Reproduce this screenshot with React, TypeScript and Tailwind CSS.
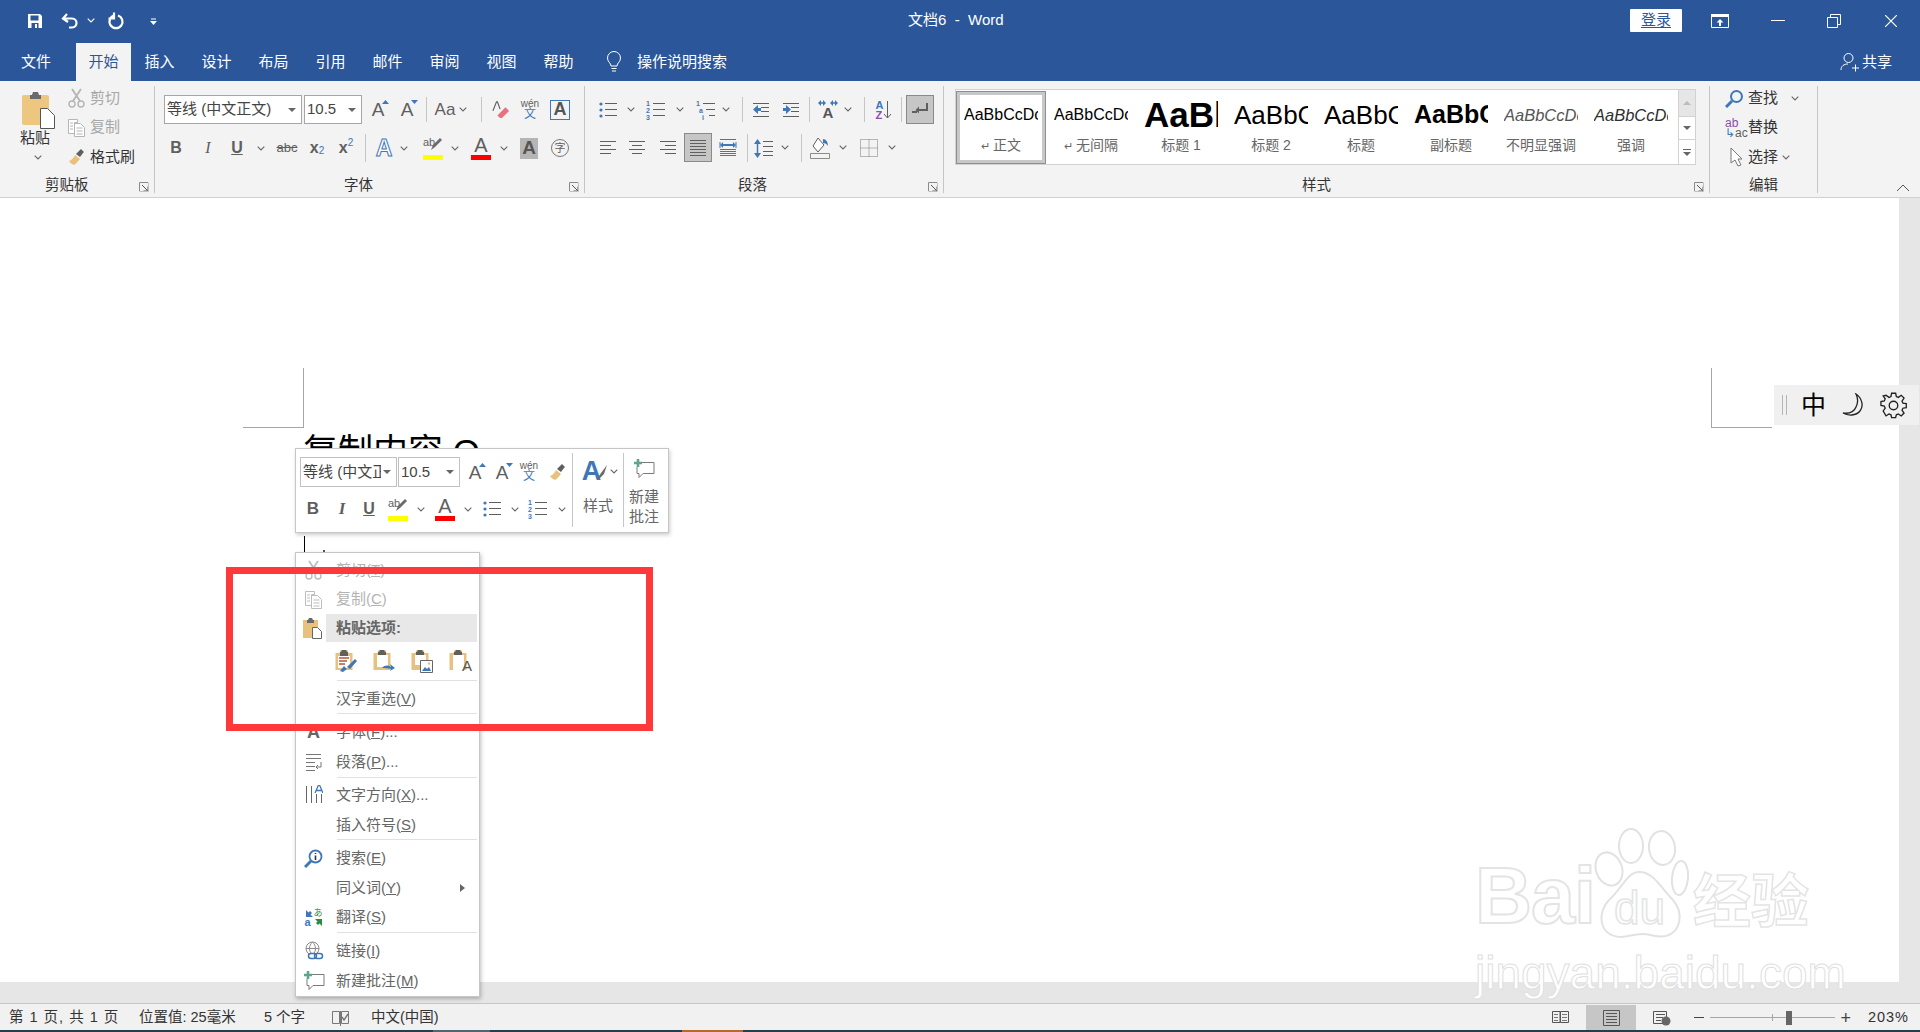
import type { ReactNode } from 'react'

const GRAY = '#5f5f5f'
const BLUE = '#3f77b8'

const Ic = ({ w = 20, h = 20, vb, className, children }: { w?: number; h?: number; vb?: string; className?: string; children: ReactNode }) => (
  <svg width={w} height={h} viewBox={vb ?? `0 0 ${w} ${h}`} fill="none" className={className}>
    {children}
  </svg>
)

const Chev = ({ className = '', color = '#666' }: { className?: string; color?: string }) => (
  <span className={`w-[12px] flex justify-center shrink-0 ${className}`}>
    <svg width="8" height="5" viewBox="0 0 8 5" fill="none">
      <path d="M.7.7 4 4 7.3.7" stroke={color} strokeWidth="1.1" />
    </svg>
  </span>
)

const Sep = ({ className = '' }: { className?: string }) => <span className={`w-px bg-[#c6c6c6] shrink-0 ${className}`} />

const Cell = ({ className = '', children }: { className?: string; children: ReactNode }) => (
  <span className={`flex items-center justify-center shrink-0 ${className}`}>{children}</span>
)

const Launcher = ({ className = '' }: { className?: string }) => (
  <svg width="10" height="10" viewBox="0 0 10 10" fill="none" className={className}>
    <path d="M.5 9V.5H9" stroke="#8a8a8a" />
    <path d="M3 3l5.5 5.5M9 4.5V9H4.5" stroke="#555" />
    <path d="M.5 9.5H9.5V.5" stroke="#c0c0c0" />
  </svg>
)

const Lines = ({ x = 2, w = 16, ys, color = GRAY }: { x?: number; w?: number; ys: number[]; color?: string }) => (
  <path d={ys.map((y) => `M${x} ${y + 0.5}h${w}`).join('')} stroke={color} />
)

const GrowA = ({ up }: { up: boolean }) => (
  <span className="relative text-[19px] leading-none text-[#5f5f5f]">
    A
    <svg width="7" height="4" viewBox="0 0 7 4" className="absolute -right-[5px] top-0">
      <path d={up ? 'M0 4 3.5 0 7 4Z' : 'M0 0h7L3.5 4Z'} fill={BLUE} />
    </svg>
  </span>
)

const Wen = () => (
  <span className="flex flex-col items-center leading-none">
    <span className="text-[10px] text-[#5f5f5f] leading-[9px]">wén</span>
    <span className="text-[12px] text-[#3f77b8] leading-[13px]">文</span>
  </span>
)

const Marker = () => (
  <span className="relative w-[20px] h-[24px] block">
    <span className="absolute left-0 top-0 text-[11px] leading-[12px] text-[#5f5f5f]">ab</span>
    <svg width="20" height="20" viewBox="0 0 20 20" fill="none" className="absolute left-0 top-0">
      <path d="M8 14l2-5 7-7 2 2-7 7-4 3Z" fill="#6b6b6b" />
    </svg>
    <span className="absolute left-0 bottom-0 w-[20px] h-[5px] bg-[#ffff00]" />
  </span>
)

const RedA = () => (
  <span className="flex flex-col items-center w-[20px]">
    <span className="text-[20px] leading-[19px] text-[#5f5f5f]">A</span>
    <span className="w-[20px] h-[5px] bg-[#ff0000]" />
  </span>
)

const Bullets = () => (
  <Ic>
    <circle cx="3" cy="4" r="1.6" fill={BLUE} />
    <circle cx="3" cy="10" r="1.6" fill={BLUE} />
    <circle cx="3" cy="16" r="1.6" fill={BLUE} />
    <Lines x={7} w={12} ys={[3, 9, 15]} />
  </Ic>
)

const Numbered = () => (
  <span className="relative block w-[20px] h-[20px]">
    <span className="absolute left-0 top-0 w-[6px] flex flex-col text-[7px] leading-[7px] font-bold text-[#3f77b8]">
      <span>1</span>
      <span>2</span>
      <span>3</span>
    </span>
    <Ic>
      <Lines x={7} w={12} ys={[3, 9, 15]} />
    </Ic>
  </span>
)

const Brush = () => (
  <Ic>
    <path d="M2 14c3-1 5-4 6-6l5 4c-2 2-4 5-6 6-2-1-4-2-5-4Z" fill="#e8c27c" />
    <path d="M9 7l4-4 1-1 3 3-1 1-3 4Z" fill="#5f5f5f" />
  </Ic>
)

const Comment = () => (
  <Ic w={22} h={22}>
    <path d="M8 4.5h13v11H10l-4 4v-4H4V9" stroke="#7a7a7a" />
    <path d="M5 1v8M1 5h8" stroke="#5fa58d" strokeWidth="2.6" />
  </Ic>
)

const Scissors = ({ color = '#b5b5b5' }: { color?: string }) => (
  <Ic>
    <circle cx="5" cy="16" r="3" stroke={color} strokeWidth="1.4" />
    <circle cx="14" cy="16" r="3" stroke={color} strokeWidth="1.4" />
    <path d="M6 13 14 1M13 13 5 1" stroke={color} strokeWidth="1.8" />
  </Ic>
)

const CopyIcon = ({ color = '#b5b5b5' }: { color?: string }) => (
  <Ic>
    <path d="M1.500 1.500h9v3h-3v11h-6ZM7.500 5.500h6l4 4v9h-10Z" stroke={color} fill="#fff" />
    <path d="M3 5h3M3 8h3M3 11h3M9.500 10h6M9.500 13h6M9.500 16h6" stroke={color} />
  </Ic>
)

const PasteBig = () => (
  <Ic w={35} h={39}>
    <rect x="1" y="5" width="27" height="30" rx="2" fill="#edc77f" />
    <path d="M9 5h2l1-3h5l1 3h2v4H9Z" fill="#6a6a6a" />
    <path d="M19.500 18.500h7l7 7v13h-14Z" fill="#fff" stroke="#555" />
  </Ic>
)

const Board = ({ children }: { children?: ReactNode }) => (
  <Ic w={24} h={24}>
    <path d="M1.500 4h4l1-3h7l1 3h4v17h-17Z" fill="#e8c27c" />
    <path d="M6 3h1l1-2h4l1 2h1v4H6Z" fill="#5f5f5f" />
    {children}
  </Ic>
)

const PasteOptions = () => (
  <div className="flex items-center ml-[38px] h-[38px] gap-[14px]">
    <Board>
      <path d="M4 7h12v12H4Z" fill="#fff" />
      <path d="M5 9h10M5 12h8M5 15h6" stroke="#b5553f" strokeWidth="1.500" />
      <path d="M6 22l4-5 3 3-4 3ZM13 18l8-8 2 2-7 8Z" fill={BLUE} />
    </Board>
    <Board>
      <path d="M5 6h11v12H5Z" fill="#fff" />
      <path d="M10 19c3-3 6-3 9-1l-1-3 5 4-5 3 1-2c-3-1-6-1-9-1Z" fill={BLUE} />
    </Board>
    <Board>
      <path d="M5 6h11v10H5Z" fill="#fff" />
      <path d="M10.500 11.500h12v12h-12Z" fill="#fff" stroke="#666" />
      <path d="M12 22l3-4 2 2 2-2 2 4Z" fill={BLUE} />
      <circle cx="19" cy="14.500" r="1.200" fill="#e8c27c" />
    </Board>
    <span className="relative block w-[24px] h-[24px]">
      <Board>
        <path d="M5 6h11v15H5Z" fill="#fff" />
      </Board>
      <span className="absolute right-0 bottom-0 text-[15px] leading-[15px] text-[#555]">A</span>
    </span>
  </div>
)

type MenuProps = { label: string; hot?: string; tail?: string; icon?: ReactNode; disabled?: boolean; arrow?: boolean; className?: string }

const MenuRow = ({ label, hot, tail, icon, disabled, arrow, className = '' }: MenuProps) => (
  <div className={`flex items-center ${className}`}>
    <span className="w-[40px] flex justify-center pr-[5px]">{icon}</span>
    <span className={`text-[15px] ${disabled ? 'text-[#b4b4b4]' : 'text-[#666]'}`}>
      {label}(<u>{hot}</u>){tail}
    </span>
    {arrow && <span className="ml-auto mr-[14px] w-0 h-0 border-y-[4px] border-y-transparent border-l-[5px] border-l-[#666]" />}
  </div>
)

const MenuSep = ({ className = '' }: { className?: string }) => <div className={`h-px ml-[41px] mr-[2px] bg-[#e1e1e1] ${className}`} />

const styleItems = [
  { sample: 'AaBbCcDc', label: '正文', mark: true, cls: 'text-[16px] text-black' },
  { sample: 'AaBbCcDc', label: '无间隔', mark: true, cls: 'text-[16px] text-black' },
  { sample: 'AaBbC', label: '标题 1', mark: false, cls: 'text-[35px] font-bold text-black' },
  { sample: 'AaBbC', label: '标题 2', mark: false, cls: 'text-[26px] text-black' },
  { sample: 'AaBbC', label: '标题', mark: false, cls: 'text-[26px] text-black' },
  { sample: 'AaBbC', label: '副标题', mark: false, cls: 'text-[25px] font-bold text-black' },
  { sample: 'AaBbCcDc', label: '不明显强调', mark: false, cls: 'text-[16.500px] italic text-[#555]' },
  { sample: 'AaBbCcDc', label: '强调', mark: false, cls: 'text-[16.500px] italic text-[#303030]' },
]

const tabs = ['插入', '设计', '布局', '引用', '邮件', '审阅', '视图', '帮助']

function TitleBar() {
  return (
    <div className="h-[43px] pb-[2px] flex items-center text-white relative">
      <Ic className="ml-[27px]" w={16} h={16}>
        <path d="M1 1h12l2 2v12H1Z" fill="#fff" />
        <path d="M3.500 2.500h8v5h-8ZM4.500 10h7v5h-7Z" fill="#2b579a" />
        <path d="M8 11h2v4H8Z" fill="#fff" />
      </Ic>
      <Ic className="ml-[18px]" w={18} h={18}>
        <path d="M6 2 2 6.500 7 10M3 6.500h8c6 0 6 9 0 9H8" stroke="#fff" strokeWidth="2.200" />
      </Ic>
      <Chev className="ml-[6px] w-[9px]" color="#fff" />
      <Ic className="ml-[10px]" w={18} h={18}>
        <path d="M11 3.500a6.500 6.500 0 1 1-4 0M7 .5v6H1.500" stroke="#fff" strokeWidth="2.200" />
      </Ic>
      <svg width="7" height="7" viewBox="0 0 7 7" className="ml-[25px] mt-[2px]">
        <path d="M1 .5h5v1H1ZM0 3h7L3.500 7Z" fill="#fff" />
      </svg>
      <span className="absolute left-[908px] text-[15px]">文档6&nbsp; -&nbsp; Word</span>
      <div className="ml-auto flex items-center">
        <span className="w-[52px] h-[23px] bg-white rounded-[1px] text-[15px] text-[#2b579a] flex items-center justify-center underline underline-offset-2">登录</span>
        <Ic className="ml-[29px]" w={18} h={14}>
          <path d="M.5.5h17v13H.5Z" stroke="#fff" />
          <path d="M0 0h18v3H0ZM9 5l3.500 3.500H10V12H8V8.500H5.500Z" fill="#fff" />
        </Ic>
        <span className="ml-[42px] w-[14px] h-[1px] bg-white" />
        <Ic className="ml-[42px]" w={14} h={14}>
          <path d="M3.500 3V.5h10v10H11M.5 3.500h10v10H.5Z" stroke="#fff" />
        </Ic>
        <Ic className="ml-[44px] mr-[23px]" w={12} h={12}>
          <path d="M0 0l12 12M12 0 0 12" stroke="#fff" strokeWidth="1.200" />
        </Ic>
      </div>
    </div>
  )
}

function TabRow() {
  return (
    <div className="h-[38px] flex text-white text-[15px]">
      <span className="ml-[21px] w-[55px] flex items-center">文件</span>
      <span className="w-[55px] bg-[#f3f3f3] text-[#2b579a] flex items-center justify-center">开始</span>
      {tabs.map((t) => (
        <span key={t} className="w-[57px] flex items-center justify-center first:ml-[-1px]">
          {t}
        </span>
      ))}
      <span className="ml-[19px] flex items-center">
        <Ic w={16} h={22}>
          <path d="M5 15c0-3-3.500-4-3.500-8a6.500 6.500 0 0 1 13 0c0 4-3.500 5-3.500 8Z" stroke="#fff" />
          <path d="M5.500 17.500h5M6 20h4" stroke="#fff" />
        </Ic>
      </span>
      <span className="ml-[15px] flex items-center">操作说明搜索</span>
      <span className="ml-auto mr-[28px] flex items-center gap-[3px]">
        <Ic w={19} h={20}>
          <circle cx="8.500" cy="6" r="4.500" stroke="#fff" />
          <path d="M1 18c0-4 3-6 7-6M12 16h7M15.500 12.500v7" stroke="#fff" />
        </Ic>
        共享
      </span>
    </div>
  )
}

function Group({ label, className, labelClass, launcher = true, children }: { label: string; className: string; labelClass: string; launcher?: boolean; children: ReactNode }) {
  return (
    <div className={`h-[107px] mt-[5px] border-r border-[#c6c6c6] flex flex-col shrink-0 ${className}`}>
      <div className="h-[93px]">{children}</div>
      <div className="h-[14px] flex items-center text-[14.500px] text-[#333]">
        <span className={labelClass}>{label}</span>
        {launcher && <Launcher className="ml-auto mr-[5px] mt-[1px]" />}
      </div>
    </div>
  )
}

function Clipboard() {
  return (
    <Group label="剪贴板" className="w-[155px]" labelClass="ml-[45px]">
      <div className="flex">
        <div className="w-[67px] pl-[21px] pt-[4px] flex flex-col items-start">
          <PasteBig />
          <span className="-ml-[1px] -mt-[1px] text-[15px] leading-[20px] text-[#333]">粘贴</span>
          <Chev className="ml-[11px] mt-[7px]" />
        </div>
        <div className="text-[15px] flex flex-col -mt-[3px]">
          <div className="h-[30px] flex items-center gap-[3px] text-[#a8a8a8]">
            <Scissors />
            <span>剪切</span>
          </div>
          <div className="h-[29px] flex items-center gap-[3px] text-[#a8a8a8]">
            <CopyIcon />
            <span>复制</span>
          </div>
          <div className="h-[30px] flex items-center gap-[3px] text-[#333]">
            <Brush />
            <span>格式刷</span>
          </div>
        </div>
      </div>
    </Group>
  )
}

function FontBox({ text, className, arrowClass = '' }: { text: string; className: string; arrowClass?: string }) {
  return (
    <span className={`bg-white border border-[#a6a6a6] flex items-center shrink-0 overflow-hidden text-[15px] text-[#444] ${className}`}>
      <span className="ml-[2px] whitespace-nowrap overflow-hidden flex-1">{text}</span>
      <span className={`w-0 h-0 mr-[5px] ml-[2px] border-x-[4px] border-x-transparent border-t-[4px] border-t-[#666] shrink-0 ${arrowClass}`} />
    </span>
  )
}

function FontGroup() {
  return (
    <Group label="字体" className="w-[430px]" labelClass="ml-[189px]">
      <div className="mt-[9px] h-[29px] flex items-center">
        <FontBox text="等线 (中文正文)" className="ml-[9px] w-[138px] h-[29px]" />
        <FontBox text="10.5" className="ml-[2px] w-[58px] h-[29px]" />
        <Cell className="ml-[2px] w-[28px]"><GrowA up /></Cell>
        <Cell className="ml-[1px] w-[28px]"><GrowA up={false} /></Cell>
        <Sep className="ml-[5px] h-[25px]" />
        <Cell className="ml-[8px] w-[20px] text-[17px] text-[#5f5f5f]">Aa</Cell>
        <Chev className="ml-[2px]" />
        <Sep className="ml-[12px] h-[25px]" />
        <Cell className="ml-[10px] w-[18px]">
          <Ic w={20} h={20}>
            <path d="M1 11 5 1h1l3 8" stroke="#5f5f5f" strokeWidth="1.300" />
            <path d="M6 16 15 7l4 4-8 8H9Z" fill="#e8707f" />
          </Ic>
        </Cell>
        <Cell className="ml-[11px] w-[18px]"><Wen /></Cell>
        <Cell className="ml-[11px] w-[20px] h-[20px] border border-[#3f77b8] text-[18px] font-bold text-[#555]">A</Cell>
      </div>
      <div className="mt-[10px] h-[28px] flex items-center text-[#5f5f5f]">
        <Cell className="ml-[7px] w-[28px] text-[16px] font-bold">B</Cell>
        <Cell className="ml-[4px] w-[28px] text-[16px] italic [font-family:'Liberation_Serif',serif]">I</Cell>
        <Cell className="ml-[1px] w-[28px] text-[16px] font-bold underline">U</Cell>
        <Chev className="ml-[4px]" />
        <Cell className="ml-[6px] w-[28px] text-[13px] line-through">abc</Cell>
        <Cell className="ml-[2px] w-[28px] text-[16px] font-bold">x<sub className="text-[10px] text-[#3f77b8] font-normal">2</sub></Cell>
        <Cell className="ml-[1px] w-[28px] text-[16px] font-bold">x<sup className="text-[10px] text-[#3f77b8] font-normal">2</sup></Cell>
        <Sep className="ml-[5px] h-[28px]" />
        <Cell className="ml-[8px] w-[20px] text-[23px] text-white [-webkit-text-stroke:1px_#3f77b8] font-bold">A</Cell>
        <Chev className="ml-[4px]" />
        <Cell className="ml-[13px] w-[20px]"><Marker /></Cell>
        <Chev className="ml-[6px]" />
        <Cell className="ml-[10px] w-[20px]"><RedA /></Cell>
        <Chev className="ml-[7px]" />
        <Cell className="ml-[10px] w-[18px] h-[21px] bg-[#b5b5b5] text-[19px] font-bold text-[#555]">A</Cell>
        <Cell className="ml-[13px] w-[18px] h-[18px] rounded-full border border-[#777] text-[11px]">字</Cell>
      </div>
    </Group>
  )
}

const Align = ({ kind }: { kind: 'left' | 'center' | 'right' | 'full' }) => {
  const d = {
    left: 'M2 4.500h16M2 8.500h11M2 12.500h16M2 16.500h11',
    center: 'M2 4.500h16M5 8.500h10M2 12.500h16M5 16.500h10',
    right: 'M2 4.500h16M7 8.500h11M2 12.500h16M7 16.500h11',
    full: 'M2 3.500h16M2 6.500h16M2 9.500h16M2 12.500h16M2 15.500h16M2 18.500h16',
  }[kind]
  return (
    <Ic w={20} h={21}>
      <path d={d} stroke={GRAY} />
    </Ic>
  )
}

function ParagraphGroup() {
  return (
    <Group label="段落" className="w-[359px]" labelClass="ml-[153px]">
      <div className="mt-[9px] h-[29px] flex items-center">
        <Cell className="ml-[13px] w-[20px]"><Bullets /></Cell>
        <Chev className="ml-[7px]" />
        <Cell className="ml-[9px] w-[20px]"><Numbered /></Cell>
        <Chev className="ml-[8px]" />
        <Cell className="ml-[10px] w-[20px]">
          <span className="relative block w-[20px] h-[20px]">
            <span className="absolute left-0 top-0 text-[7px] leading-[7px] font-bold text-[#3f77b8] flex flex-col">
              <span>1</span>
              <span className="ml-[3px]">a</span>
              <span className="ml-[6px]">i</span>
            </span>
            <Ic>
              <path d="M7 3.500h12M10 9.500h9M13 15.500h6" stroke={GRAY} />
            </Ic>
          </span>
        </Cell>
        <Chev className="ml-[4px]" />
        <Sep className="ml-[10px] h-[25px]" />
        <Cell className="ml-[8px] w-[20px]">
          <Ic>
            <path d="M2 3.500h16M10 7.500h8M10 11.500h8M2 16.500h16" stroke={GRAY} />
            <path d="M2 9.500 7 5v3h3v3H7v3Z" fill={BLUE} />
          </Ic>
        </Cell>
        <Cell className="ml-[10px] w-[20px]">
          <Ic>
            <path d="M2 3.500h16M10 7.500h8M10 11.500h8M2 16.500h16" stroke={GRAY} />
            <path d="M10 9.500 5 5v3H2v3h3v3Z" fill={BLUE} />
          </Ic>
        </Cell>
        <Sep className="ml-[8px] h-[25px]" />
        <Cell className="ml-[8px] w-[20px]">
          <span className="relative flex flex-col items-center">
            <svg width="20" height="6" viewBox="0 0 20 6" fill="none">
              <path d="M1 3h6M13 3h6" stroke={BLUE} strokeWidth="1.500" />
              <path d="M0 3l3-3v6ZM8 3 5 0v6ZM12 3l3-3v6ZM20 3l-3-3v6Z" fill={BLUE} />
            </svg>
            <span className="text-[15px] leading-[13px] font-bold text-[#555]">A</span>
          </span>
        </Cell>
        <Chev className="ml-[4px]" />
        <Sep className="ml-[10px] h-[25px]" />
        <Cell className="ml-[9px] w-[20px]">
          <span className="flex items-center">
            <span className="flex flex-col text-[11px] leading-[10px] font-bold">
              <span className="text-[#3f77b8]">A</span>
              <span className="text-[#8a4fa8]">Z</span>
            </span>
            <Ic w={9} h={20}>
              <path d="M4.500 1v17M1 14l3.500 4L8 14" stroke={GRAY} />
            </Ic>
          </span>
        </Cell>
        <Sep className="ml-[7px] h-[25px]" />
        <Cell className="ml-[4px] w-[28px] h-[29px] bg-[#c6c6c6] border border-[#8a8a8a]">
          <Ic>
            <path d="M16 3v6H9V6.500L5.500 10 9 13.500V11h9V3Z" fill={GRAY} />
            <path d="M2 11h5v2H2Z" fill={GRAY} />
          </Ic>
        </Cell>
      </div>
      <div className="mt-[9px] h-[29px] flex items-center">
        <Cell className="ml-[13px] w-[20px]"><Align kind="left" /></Cell>
        <Cell className="ml-[9px] w-[20px]"><Align kind="center" /></Cell>
        <Cell className="ml-[11px] w-[20px]"><Align kind="right" /></Cell>
        <Cell className="ml-[6px] w-[28px] h-[29px] bg-[#c6c6c6] border border-[#8a8a8a]"><Align kind="full" /></Cell>
        <Cell className="ml-[6px] w-[20px]">
          <Ic>
            <path d="M2 1.500h16M2 4v6M18 4v6M2 11.500h16M2 13.500h16M2 15.500h16M2 17.500h16" stroke={BLUE} />
            <path d="M4 7h12" stroke={BLUE} strokeWidth="2" />
            <path d="M2 7l3-3v6ZM18 7l-3-3v6Z" fill={BLUE} />
          </Ic>
        </Cell>
        <Sep className="ml-[9px] h-[28px]" />
        <Cell className="ml-[6px] w-[20px]">
          <Ic>
            <path d="M9 3.500h10M9 8.500h10M9 13.500h10M9 17.500h10" stroke={GRAY} />
            <path d="M3.500 5v11" stroke={BLUE} strokeWidth="1.500" />
            <path d="M0 6l3.500-5L7 6ZM0 15l3.500 5L7 15Z" fill={BLUE} />
          </Ic>
        </Cell>
        <Chev className="ml-[5px]" />
        <Sep className="ml-[10px] h-[28px]" />
        <Cell className="ml-[8px] w-[20px]">
          <Ic w={20} h={22}>
            <path d="M8 1l6 7-6 7-5-6Z" fill="#fff" stroke={GRAY} />
            <path d="M13 2c3 0 5 3 5 7-1-2-3-3-5-3Z" fill={BLUE} />
            <path d="M.5 16.500h19v5H.5Z" fill="#f3f3f3" stroke="#8a8a8a" />
          </Ic>
        </Cell>
        <Chev className="ml-[7px]" />
        <Cell className="ml-[10px] w-[20px]">
          <Ic>
            <path d="M1.500 1.500h17v17h-17ZM10 1.500v17M1.500 10h17" stroke="#777" strokeDasharray="1 1" />
          </Ic>
        </Cell>
        <Chev className="ml-[7px]" />
      </div>
    </Group>
  )
}

function StylesGroup() {
  return (
    <Group label="样式" className="w-[766px]" labelClass="ml-[358px]">
      <div className="ml-[11px] mt-[3px] w-[741px] h-[76px] bg-white border border-[#d2d2d2] flex">
        <div className="flex-1 flex">
          {styleItems.map((s, i) => (
            <div
              key={s.label}
              className={`w-[90px] h-[73px] shrink-0 flex flex-col items-center ${i === 0 ? 'mt-[1px] border border-[#8e8e8e] outline-[3px] outline-[#c8c8c8] -outline-offset-[4px]' : 'mt-[2px]'}`}
            >
              <div className={`w-[74px] h-[46px] overflow-hidden whitespace-nowrap flex items-center ${s.cls}`}>{s.sample}</div>
              <div className="text-[14px] text-[#666] leading-[16px] -mt-[1px] whitespace-nowrap">
                {s.mark && <span className="mr-[3px] text-[11px]">↵</span>}
                {s.label}
              </div>
            </div>
          ))}
        </div>
        <div className="w-[17px] flex flex-col border-l border-[#d2d2d2] shrink-0">
          <div className="h-[26px] bg-[#e6e6e6] flex items-center justify-center">
            <span className="w-0 h-0 border-x-[4px] border-x-transparent border-b-[4px] border-b-[#bbb]" />
          </div>
          <div className="h-[24px] border-y border-[#d2d2d2] flex items-center justify-center">
            <span className="w-0 h-0 border-x-[4px] border-x-transparent border-t-[4px] border-t-[#666]" />
          </div>
          <div className="flex-1 flex flex-col items-center justify-center gap-[2px]">
            <span className="w-[8px] h-px bg-[#666]" />
            <span className="w-0 h-0 border-x-[4px] border-x-transparent border-t-[4px] border-t-[#666]" />
          </div>
        </div>
      </div>
    </Group>
  )
}

function EditGroup() {
  return (
    <Group label="编辑" className="w-[108px]" labelClass="ml-[39px]" launcher={false}>
      <div className="-mt-[3px] text-[15px] text-[#333] flex flex-col">
        <div className="h-[30px] flex items-center">
          <Ic className="ml-[15px]" w={19} h={19}>
            <circle cx="11.500" cy="7.500" r="5.500" stroke={BLUE} strokeWidth="2" />
            <path d="M7 12 1 18" stroke={BLUE} strokeWidth="3" />
          </Ic>
          <span className="ml-[4px]">查找</span>
          <Chev className="ml-[11px]" />
        </div>
        <div className="h-[29px] flex items-center">
          <span className="ml-[15px] w-[20px] flex flex-col text-[12px] leading-[10px] text-[#5f5f5f]">
            <span className="text-[#8a4fa8]">ab</span>
            <span><span className="text-[#3f77b8]">↳</span>ac</span>
          </span>
          <span className="ml-[3px]">替换</span>
        </div>
        <div className="h-[30px] flex items-center">
          <Ic className="ml-[20px]" w={13} h={20}>
            <path d="M1 1v15l4-3 3 6 3-1-3-6h4Z" fill="#fff" stroke="#777" />
          </Ic>
          <span className="ml-[5px]">选择</span>
          <Chev className="ml-[2px]" />
        </div>
      </div>
    </Group>
  )
}

function Page() {
  return (
    <div className="flex-1 bg-white overflow-hidden">
      <div className="flex justify-between pl-[243px] pr-[127px] pt-[170px]">
        <div className="w-[61px] h-[60px] border-r border-b border-[#a6a6a6]" />
        <div className="w-[61px] h-[60px] border-l border-b border-[#a6a6a6]" />
      </div>
      <div className="ml-[303px] pt-[2px] h-[108px] text-[35px] leading-[44px] text-black flex items-start whitespace-nowrap">
        复制内容 O<span className="ml-[22px] text-[14px]">↵</span>
      </div>
      <div className="ml-[304px] flex items-start">
        <div className="w-px h-[24px] bg-black" />
        <div className="ml-[18px] mt-[14px] w-[2px] h-[2px] bg-[#555]" />
      </div>
    </div>
  )
}

function MiniToolbar() {
  return (
    <div className="absolute left-[295px] top-[448px] w-[374px] h-[85px] bg-white border border-[#c6c6c6] shadow-[1px_2px_4px_rgba(0,0,0,0.2)] flex">
      <div className="w-[276px] shrink-0">
        <div className="mt-[8px] h-[30px] flex items-center">
          <FontBox text="等线 (中文正文)" className="ml-[4px] w-[97px] h-[30px] !border-[#c0c0c0]" />
          <FontBox text="10.5" className="ml-[1px] w-[62px] h-[30px] !border-[#c0c0c0]" />
          <Cell className="ml-[5px] w-[20px]"><GrowA up /></Cell>
          <Cell className="ml-[7px] w-[20px]"><GrowA up={false} /></Cell>
          <Cell className="ml-[7px] w-[20px]"><Wen /></Cell>
          <Cell className="ml-[9px] w-[20px]"><Brush /></Cell>
        </div>
        <div className="mt-[8px] h-[28px] flex items-center text-[#5f5f5f]">
          <Cell className="ml-[7px] w-[20px] text-[17px] font-bold">B</Cell>
          <Cell className="ml-[9px] w-[20px] text-[17px] font-bold italic [font-family:'Liberation_Serif',serif]">I</Cell>
          <Cell className="ml-[7px] w-[20px] text-[16px] font-bold underline">U</Cell>
          <Cell className="ml-[9px] w-[20px]"><Marker /></Cell>
          <Chev className="ml-[7px]" />
          <Cell className="ml-[8px] w-[20px]"><RedA /></Cell>
          <Chev className="ml-[7px]" />
          <Cell className="ml-[8px] w-[20px]"><Bullets /></Cell>
          <Chev className="ml-[7px]" />
          <Cell className="ml-[7px] w-[20px]"><Numbered /></Cell>
          <Chev className="ml-[8px]" />
        </div>
      </div>
      <Sep className="h-[74px] mt-[4px]" />
      <div className="w-[50px] shrink-0 flex flex-col items-center relative">
        <div className="mt-[10px] h-[24px] flex items-center text-[#3f77b8] ml-[6px]">
          <span className="text-[27px] leading-[24px] font-bold">A</span>
          <Ic className="-ml-[5px]" w={12} h={18}>
            <path d="M1 17l4-6 6-8-3 9-5 5Z" fill="#6b6b6b" />
          </Ic>
          <Chev className="w-[9px]" />
        </div>
        <span className="mt-[13px] text-[15px] leading-[20px] text-[#666]">样式</span>
      </div>
      <Sep className="h-[74px] mt-[4px]" />
      <div className="flex-1 flex flex-col items-center text-[15px] leading-[20px] text-[#666] pr-[4px]">
        <div className="mt-[9px] h-[23px]"><Comment /></div>
        <span className="mt-[6px]">新建</span>
        <span>批注</span>
      </div>
    </div>
  )
}

function ContextMenu() {
  return (
    <div className="absolute left-[295px] top-[552px] w-[185px] pt-[2px] bg-white border border-[#c6c6c6] shadow-[1px_2px_4px_rgba(0,0,0,0.25)]">
      <MenuRow label="剪切" hot="T" disabled className="h-[30px]" icon={<Scissors color="#bdbdbd" />} />
      <MenuRow label="复制" hot="C" disabled className="h-[29px]" icon={<CopyIcon color="#bdbdbd" />} />
      <div className="h-[28px] flex items-center">
        <span className="w-[30px] flex justify-center pl-[1px]">
          <Ic w={20} h={22}>
            <rect x="1" y="3" width="15" height="18" fill="#e8c27c" />
            <path d="M5 3h1l1-2h3l1 2h1v3H5Z" fill="#6a6a6a" />
            <path d="M10.500 10.500h5l4 4v7h-9Z" fill="#fff" stroke="#666" />
          </Ic>
        </span>
        <span className="h-[28px] flex-1 mr-[2px] bg-[#e8e8e8] pl-[10px] flex items-center text-[15px] font-bold text-[#666]">粘贴选项:</span>
      </div>
      <PasteOptions />
      <MenuSep />
      <MenuRow label="汉字重选" hot="V" className="h-[28px] mt-[4px]" />
      <MenuSep />
      <MenuRow
        label="字体"
        hot="F"
        tail="..."
        className="h-[28px] mt-[4px]"
        icon={<span className="text-[18px] font-bold leading-none text-[#666]">A</span>}
      />
      <MenuRow
        label="段落"
        hot="P"
        tail="..."
        className="h-[28px] mt-[2px]"
        icon={
          <Ic>
            <path d="M2 2.500h15M2 6.500h15M2 10.500h9M2 14.500h9M2 18.500h9" stroke="#777" />
            <path d="M17 10v5h-5M14 13l-2 2 2 2" stroke="#777" />
          </Ic>
        }
      />
      <MenuSep className="mt-[1px]" />
      <MenuRow
        label="文字方向"
        hot="X"
        tail="..."
        className="h-[30px] mt-[2px]"
        icon={
          <Ic w={18} h={20}>
            <path d="M1.500 1v17M6.500 1v17M11.500 9v9M16.500 9v9" stroke="#666" />
            <path d="M10 8 13.500 0h1L18 8M11.500 5.500h5" stroke={BLUE} strokeWidth="1.300" />
          </Ic>
        }
      />
      <MenuRow label="插入符号" hot="S" className="h-[28px] mt-[1px]" />
      <MenuSep />
      <MenuRow
        label="搜索"
        hot="E"
        className="h-[30px] mt-[3px]"
        icon={
          <Ic w={19} h={19}>
            <circle cx="11.500" cy="7.500" r="6" stroke={BLUE} strokeWidth="1.800" />
            <path d="M11.500 4v1M11.500 6.500V11" stroke="#333" strokeWidth="1.600" />
            <path d="M7 12 1 18" stroke={BLUE} strokeWidth="3" />
          </Ic>
        }
      />
      <MenuRow label="同义词" hot="Y" arrow className="h-[30px]" />
      <MenuRow
        label="翻译"
        hot="S"
        className="h-[29px]"
        icon={
          <span className="relative block w-[18px] h-[18px]">
            <Ic w={18} h={18}>
              <path d="M1 1v7h7L5.500 5.500 7 4 5 2 3.500 3.500Z" fill={BLUE} />
              <path d="M17 17v-7h-7l2.500 2.500L11 14l2 2 1.500-1.500Z" fill="#2e8b3d" />
            </Ic>
            <span className="absolute right-0 top-0 text-[9px] leading-[9px] text-[#2e8b3d]">あ</span>
            <span className="absolute left-0 bottom-0 text-[11px] leading-[10px] font-bold text-[#3f77b8]">a</span>
          </span>
        }
      />
      <MenuSep />
      <MenuRow
        label="链接"
        hot="I"
        className="h-[30px] mt-[3px]"
        icon={
          <Ic>
            <circle cx="8.500" cy="7.500" r="6.500" stroke="#8a8a8a" />
            <path d="M2 7.500h13M8.500 1c-4 4-4 9 0 13 4-4 4-9 0-13Z" stroke="#8a8a8a" />
            <rect x="4.500" y="12.500" width="8" height="5" rx="2.500" stroke={BLUE} strokeWidth="1.500" fill="#fff" />
            <rect x="10.500" y="12.500" width="8" height="5" rx="2.500" stroke={BLUE} strokeWidth="1.500" />
          </Ic>
        }
      />
      <MenuRow label="新建批注" hot="M" className="h-[30px]" icon={<Comment />} />
    </div>
  )
}

function Watermark() {
  return (
    <div className="absolute left-[1475px] top-[828px] w-[350px] h-[172px] flex flex-col pointer-events-none">
      <div className="flex items-end h-[112px]">
        <span className="text-[79px] leading-[88px] font-bold tracking-[-1px] text-white [-webkit-text-stroke:2px_#e4e4e4]">Bai</span>
        <span className="relative block -ml-[2px] w-[96px] h-[112px] shrink-0">
          <svg width="96" height="112" viewBox="0 -12 96 112" fill="none" stroke="#e2e2e2" strokeWidth="2">
            <ellipse cx="16" cy="29" rx="13" ry="17" transform="rotate(-20 16 29)" />
            <ellipse cx="38" cy="6" rx="12" ry="17" />
            <ellipse cx="69" cy="8" rx="13" ry="17" transform="rotate(-8 69 8)" />
            <ellipse cx="87" cy="38" rx="8" ry="17" transform="rotate(5 87 38)" />
            <path d="M46 32c-12 0-18 18-30 28-12 12-11 36 12 37 8 0 12-3 21-3 10 0 15 4 24 2 15-4 18-23 7-36-13-13-19-28-34-28Z" />
          </svg>
          <span className="absolute left-[21px] top-[55px] text-[46px] leading-[50px] text-white [-webkit-text-stroke:1.500px_#e4e4e4]">du</span>
        </span>
        <span className="ml-[4px] text-[58px] leading-[76px] font-bold whitespace-nowrap text-white [-webkit-text-stroke:1.500px_#e4e4e4]">经验</span>
      </div>
      <span className="mt-[6px] text-[46px] leading-[54px] text-white [-webkit-text-stroke:1px_#e0e0e0] whitespace-nowrap">jingyan.baidu.com</span>
    </div>
  )
}

function ImeBar() {
  return (
    <div className="absolute left-[1774px] top-[385px] w-[145px] h-[40px] bg-[#f0f0f0] flex items-center text-black">
      <span className="ml-[8px] w-[5px] h-[20px] border-x border-[#b5b5b5]" />
      <span className="ml-[14px] w-[24px] text-[25px] leading-none text-center">中</span>
      <Ic className="ml-[17px]" w={24} h={24}>
        <path d="M14 1c6 4 8 12 4 17-4 5-12 5-17 2 7 1 11-1 13-6 2-4 2-9 0-13Z" stroke="#222" strokeWidth="1.300" />
      </Ic>
      <Ic className="ml-[14px]" w={27} h={27} vb="0 0 24 24">
        <circle cx="12" cy="12" r="3.800" stroke="#222" strokeWidth="1.200" />
        <path
          d="M10 1h4l.7 3.200 2 .9L19.500 3l2.800 2.800-2 2.900.9 2 3.300.6v3.900l-3.300.6-.9 2 2 2.800-2.800 2.800-2.800-2-2 .9-.7 2.700h-4l-.6-2.700-2-.9-2.900 2L1.700 18.500l2-2.800-.9-2L-.5 13V9.200l3.300-.6.900-2-2-2.900L4.500 3l2.900 2.100 2-.9Z"
          stroke="#222"
          strokeWidth="1.300"
          transform="translate(1.300 .2) scale(.9)"
        />
      </Ic>
    </div>
  )
}

function StatusBar() {
  return (
    <div className="h-[27px] border-t border-[#c6c6c6] bg-[#f1f1f1] flex items-center text-[14.500px] text-[#333] whitespace-nowrap pt-[1px]">
      <span className="ml-[9px] w-[130px] tracking-[1px]">第 1 页, 共 1 页</span>
      <span className="w-[125px]">位置值: 25毫米</span>
      <span className="w-[68px]">5 个字</span>
      <Ic w={18} h={18}>
        <path d="M.5 2.500h7v12h-7ZM9.500 2.500h7v12h-7ZM8.500 2v15" stroke="#777" />
        <path d="M10 8l2 3 4-6" stroke="#777" strokeWidth="1.400" />
      </Ic>
      <span className="ml-[21px]">中文(中国)</span>
      <div className="ml-auto flex items-center h-full">
        <Ic className="mr-[17px]" w={17} h={15}>
          <path d="M.5 1.500h7.500v11H.5ZM8.500 1.500H16.500v11H8.500Z" stroke="#555" />
          <path d="M2 4.500h4M2 7.500h4M2 10.500h4M10 4.500h5M10 7.500h5M10 10.500h5" stroke="#777" />
        </Ic>
        <span className="w-[50px] h-full bg-[#c6c6c6] flex items-center justify-center">
          <Ic w={17} h={16}>
            <path d="M.5.500h16v15H.5Z" stroke="#555" />
            <path d="M3 3.500h11M3 6.500h11M3 9.500h11M3 12.500h11" stroke="#555" />
          </Ic>
        </span>
        <Ic className="ml-[17px]" w={18} h={16}>
          <path d="M.5 1.500h13v12H.5Z" stroke="#555" />
          <path d="M3 4.500h9M3 7.500h7M3 10.500h5" stroke="#555" />
          <circle cx="13" cy="11" r="4.500" fill="#666" />
        </Ic>
        <span className="ml-[23px] w-[10px] h-px bg-[#444]" />
        <span className="ml-[6px] relative w-[125px] h-px bg-[#a6a6a6] flex items-center">
          <span className="ml-[62px] w-px h-[7px] bg-[#a6a6a6]" />
          <span className="ml-[13px] w-[6px] h-[14px] bg-[#666]" />
        </span>
        <span className="ml-[5px] text-[18px] font-light leading-none text-[#444]">+</span>
        <span className="ml-[17px] mr-[11px] tracking-[1px]">203%</span>
      </div>
    </div>
  )
}

export default function App() {
  return (
    <div className="relative w-[1920px] h-[1032px] overflow-hidden flex flex-col bg-white [font-family:'Liberation_Sans','Noto_Sans_CJK_SC',sans-serif]">
      <div className="bg-[#2b579a] shrink-0">
        <TitleBar />
        <TabRow />
      </div>

      <div className="h-[117px] bg-[#f3f3f3] border-b border-[#d0d0d0] flex shrink-0">
        <Clipboard />
        <FontGroup />
        <ParagraphGroup />
        <StylesGroup />
        <EditGroup />
        <Ic className="ml-auto mr-[10px] mt-[103px]" w={14} h={8}>
          <path d="M1 7l6-6 6 6" stroke="#555" />
        </Ic>
      </div>

      <div className="flex-1 flex bg-[#e6e6e6] pr-[21px] pb-[21px] min-h-0">
        <Page />
      </div>

      <StatusBar />
      <div className="h-[2px] bg-[#243e4c] flex shrink-0">
        <span className="ml-[433px] w-[57px] bg-[#4f6670]" />
        <span className="ml-[192px] w-[61px] bg-[#b5692d]" />
      </div>

      <Watermark />
      <MiniToolbar />
      <ContextMenu />
      <ImeBar />
      <div className="absolute left-[226px] top-[567px] w-[427px] h-[164px] border-[7px] border-[#ff3939]" />
    </div>
  )
}
